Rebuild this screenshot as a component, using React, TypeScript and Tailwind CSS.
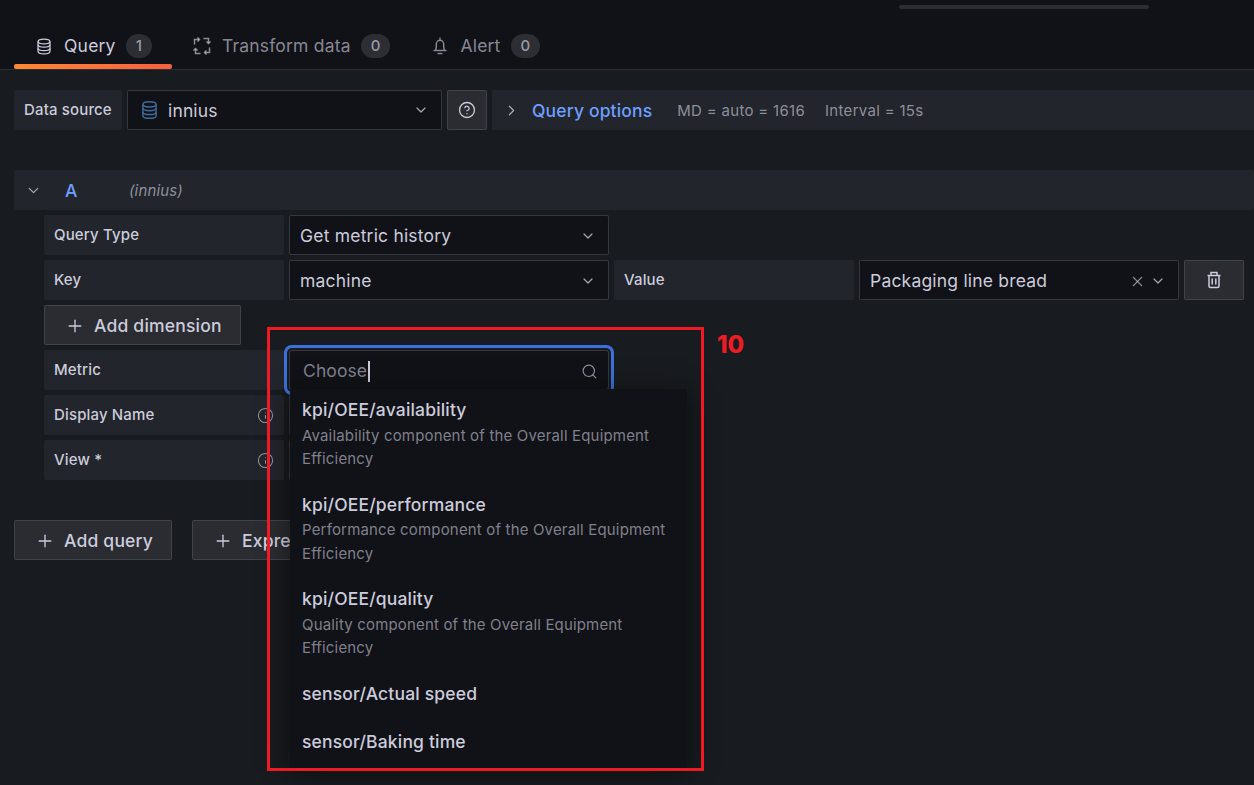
import { ChevronDown, ChevronRight, CircleHelp, Info, Plus, Search, X } from "lucide-react";

const metrics = [
  { name: "kpi/OEE/availability", description: "Availability component of the Overall Equipment Efficiency" },
  { name: "kpi/OEE/performance", description: "Performance component of the Overall Equipment Efficiency" },
  { name: "kpi/OEE/quality", description: "Quality component of the Overall Equipment Efficiency" },
  { name: "sensor/Actual speed" },
  { name: "sensor/Baking time" },
];

function DatabaseIcon({ className }: { className?: string }) {
  return (
    <svg viewBox="0 0 18 20" fill="none" stroke="currentColor" strokeWidth="1.5" className={className}>
      <ellipse cx="9" cy="4" rx="7" ry="2.8" />
      <path d="M2 4v12c0 1.6 3.1 2.8 7 2.8s7-1.2 7-2.8V4" />
      <path d="M2 8c0 1.6 3.1 2.8 7 2.8s7-1.2 7-2.8" />
      <path d="M2 12c0 1.6 3.1 2.8 7 2.8s7-1.2 7-2.8" />
    </svg>
  );
}

function TransformIcon({ className }: { className?: string }) {
  return (
    <svg viewBox="0 0 20 20" fill="none" stroke="currentColor" strokeWidth="1.5" className={className}>
      {[0, 90, 180, 270].map((angle) => (
        <g key={angle} transform={`rotate(${angle} 10 10)`}>
          <path d="M2.5 8.5V3.5H7" />
          <path d="M5.5 1.5L7.5 3.5L5.5 5.5" />
        </g>
      ))}
    </svg>
  );
}

function BellIcon({ className }: { className?: string }) {
  return (
    <svg viewBox="0 0 20 20" fill="none" stroke="currentColor" strokeWidth="1.4" className={className}>
      <path d="M10 1.5v2" />
      <path d="M5.5 14c.6-1 .8-2 .8-3.5V8a3.7 3.7 0 0 1 7.4 0v2.5c0 1.5.2 2.5.8 3.5" />
      <path d="M3.5 14.5h13" />
      <path d="M7.5 17.5h5" />
    </svg>
  );
}

function TrashIcon({ className }: { className?: string }) {
  return (
    <svg viewBox="0 0 20 20" fill="none" stroke="currentColor" strokeWidth="1.5" className={className}>
      <path d="M3.5 5.5h13" />
      <path d="M7 5.5V2.5h6v3" />
      <path d="M5 5.5V16a1.5 1.5 0 0 0 1.5 1.5h7A1.5 1.5 0 0 0 15 16V5.5" />
      <path d="M8.2 8.5v6M11.8 8.5v6" />
    </svg>
  );
}

function Tab({ icon, label, count, active }: { icon: React.ReactNode; label: string; count: number; active?: boolean }) {
  return (
    <div className={`relative flex h-[48px] items-center gap-[10px] px-5 pt-[2px] text-[17.5px] tracking-[0.2px] ${active ? "text-[#ccccdc]" : "text-[#ccccdc]/65"}`}>
      <span className="flex w-5 justify-center">{icon}</span>
      <span>{label}</span>
      <span className="flex h-6 items-center justify-center rounded-full bg-[#2c2e33] px-[10px] text-[15px] font-medium tracking-normal text-[#ccccdc]/70">
        {count}
      </span>
      {active && <div className="absolute bottom-0 left-0 right-0 h-[5px] rounded-[2px] bg-gradient-to-r from-[#ff8833] to-[#f55f3e]" />}
    </div>
  );
}

function Label({ text, info, className }: { text: string; info?: boolean; className?: string }) {
  return (
    <div className={`flex h-10 items-center justify-between rounded-[2px] bg-[#22252b] px-[10px] text-[15px] font-medium tracking-[0.15px] text-[#ccccdc] ${className ?? "w-[240px]"}`}>
      <span>{text}</span>
      {info && <Info className="h-[17px] w-[17px] text-[#ccccdc]/65" strokeWidth={1.5} />}
    </div>
  );
}

function Select({ value, clear }: { value: string; clear?: boolean }) {
  return (
    <div className="flex h-10 w-[320px] items-center rounded-[2px] border border-[#ccccdc]/20 bg-[#111217] pl-[10px] pr-[12px] pt-[2px] text-[17.5px] tracking-[0.2px] text-[#ccccdc]">
      <span className="flex-1">{value}</span>
      {clear && <X className="mr-[4px] h-[17px] w-[17px] text-[#ccccdc]/65" strokeWidth={1.6} />}
      <ChevronDown className="h-[16px] w-[16px] text-[#ccccdc]/80" strokeWidth={1.8} />
    </div>
  );
}

function Button({ label, className }: { label: string; className: string }) {
  return (
    <div className={`flex h-10 items-center gap-[9px] rounded-[2px] border border-[#ccccdc]/15 bg-[#2a2c31] pl-[20px] pt-[2px] text-[17.5px] font-medium tracking-[0.2px] text-[#ccccdc] ${className}`}>
      <Plus className="h-[20px] w-[20px]" strokeWidth={1.6} />
      <span>{label}</span>
    </div>
  );
}

export default function App() {
  return (
    <div className="relative h-[785px] overflow-hidden bg-[#181b1f] font-['Inter',sans-serif]">
      <div className="relative flex h-[70px] items-end border-b border-[#ccccdc]/15 bg-[#111217] pl-[14px]">
        <div className="absolute right-[105px] top-[5px] h-[4px] w-[250px] rounded-full bg-[#2a2d33]" />
        <Tab active label="Query" count={1} icon={<DatabaseIcon className="h-[17px] w-[16px]" />} />
        <Tab label="Transform data" count={0} icon={<TransformIcon className="h-5 w-5" />} />
        <Tab label="Alert" count={0} icon={<BellIcon className="h-5 w-5" />} />
      </div>

      <div className="flex items-center gap-[5px] pl-[14px] pt-5">
        <div className="flex h-10 w-[108px] items-center rounded-[2px] bg-[#22252b] pl-[10px] text-[15px] font-medium tracking-[0.15px] text-[#ccccdc]">Data source</div>
        <div className="flex h-10 w-[315px] items-center rounded-[2px] border border-[#ccccdc]/20 bg-[#111217] pl-[13px] pr-[12px] text-[17.5px] tracking-[0.15px] text-[#ccccdc]">
          <DatabaseIcon className="mr-[10px] h-[20px] w-[17px] text-[#3f6c9a]" />
          <span className="flex-1 pt-[2px]">innius</span>
          <ChevronDown className="h-[16px] w-[16px] text-[#ccccdc]/80" strokeWidth={1.8} />
        </div>
        <div className="flex h-10 w-10 items-center justify-center rounded-[2px] border border-[#ccccdc]/15 bg-[#2a2c31] text-[#ccccdc]">
          <CircleHelp className="h-[18px] w-[18px]" strokeWidth={1.7} />
        </div>
        <div className="flex h-10 flex-1 items-center bg-[#22252b] pl-[11px]">
          <ChevronRight className="h-[17px] w-[17px] text-[#ccccdc]/80" strokeWidth={1.7} />
          <span className="ml-[12px] pt-[2px] text-[17.5px] font-medium tracking-[0.15px] text-[#6e9fff]">Query options</span>
          <span className="ml-[25px] pt-[2px] text-[15px] tracking-[0.3px] text-[#ccccdc]/65">MD = auto = 1616</span>
          <span className="ml-5 pt-[2px] text-[15px] tracking-[0.3px] text-[#ccccdc]/65">Interval = 15s</span>
        </div>
      </div>

      <div className="ml-[14px] mt-10 flex h-10 items-center rounded-[2px] bg-[#22252b] pl-[11px]">
        <ChevronDown className="h-[17px] w-[17px] text-[#ccccdc]/80" strokeWidth={1.7} />
        <span className="ml-[23px] w-[64px] pt-[2px] text-[17.5px] font-medium text-[#6e9fff]">A</span>
        <span className="pt-[2px] text-[15px] italic tracking-[0.15px] text-[#ccccdc]/65">(innius)</span>
      </div>

      <div className="ml-[44px] mt-[5px] flex flex-col gap-[5px]">
        <div className="flex gap-[5px]">
          <Label text="Query Type" />
          <Select value="Get metric history" />
        </div>
        <div className="flex gap-[5px]">
          <Label text="Key" />
          <Select value="machine" />
          <Label text="Value" />
          <Select value="Packaging line bread" clear />
          <div className="flex h-10 w-[60px] items-center justify-center rounded-[2px] border border-[#ccccdc]/15 bg-[#2a2c31] text-[#ccccdc]">
            <TrashIcon className="h-5 w-5" />
          </div>
        </div>
        <Button label="Add dimension" className="w-[197px]" />
        <div className="flex gap-[5px]">
          <Label text="Metric" />
          <div className="relative">
            <div className="flex h-10 w-[320px] items-center rounded-[3px] border border-[#ccccdc]/20 bg-[#111217] pl-[13px] pr-[10px] pt-[2px] text-[17.5px] tracking-[0.1px] shadow-[0_0_0_2px_#181b1f,0_0_0_5px_#3d71d9]">
              <span className="text-[#ccccdc]/60">Choose</span>
              <span className="ml-[1px] h-[21px] w-[2px] bg-[#ccccdc]" />
              <Search className="ml-auto h-[17px] w-[17px] text-[#ccccdc]/70" strokeWidth={1.6} />
            </div>
            <div className="absolute left-[1px] top-[39px] z-10 w-[397px] bg-[#111217] shadow-[0_4px_24px_rgba(0,0,0,0.5)]">
              {metrics.map((metric) => (
                <div key={metric.name} className={`pl-3 pr-5 ${metric.description ? "h-[94.5px] pt-[10px]" : "h-[47.5px] pt-[10.5px]"}`}>
                  <div className="text-[17.5px] font-medium leading-[22px] tracking-[0.17px] text-[#ccccdc]">{metric.name}</div>
                  {metric.description && <div className="mt-[2.7px] text-[15px] leading-[23.5px] tracking-[0.17px] text-[#ccccdc]/60">{metric.description}</div>}
                </div>
              ))}
            </div>
          </div>
        </div>
        <div className="flex gap-[5px]">
          <Label text="Display Name" info />
          <div className="h-10 w-[320px] rounded-[2px] border border-[#ccccdc]/20 bg-[#111217]" />
        </div>
        <div className="flex gap-[5px]">
          <Label text="View *" info />
          <div className="h-10 w-[320px] rounded-[2px] border border-[#ccccdc]/20 bg-[#111217]" />
        </div>
      </div>

      <div className="ml-[14px] mt-10 flex gap-5">
        <Button label="Add query" className="w-[158px]" />
        <Button label="Expression" className="w-[170px]" />
      </div>

      <div className="absolute left-[267px] top-[327px] z-20 h-[444px] w-[437px] border-[3px] border-[#ed1c24]" />
      <div className="absolute left-[717px] top-[327px] z-20 text-[24px] font-extrabold text-[#ed1c24]">10</div>
    </div>
  );
}
